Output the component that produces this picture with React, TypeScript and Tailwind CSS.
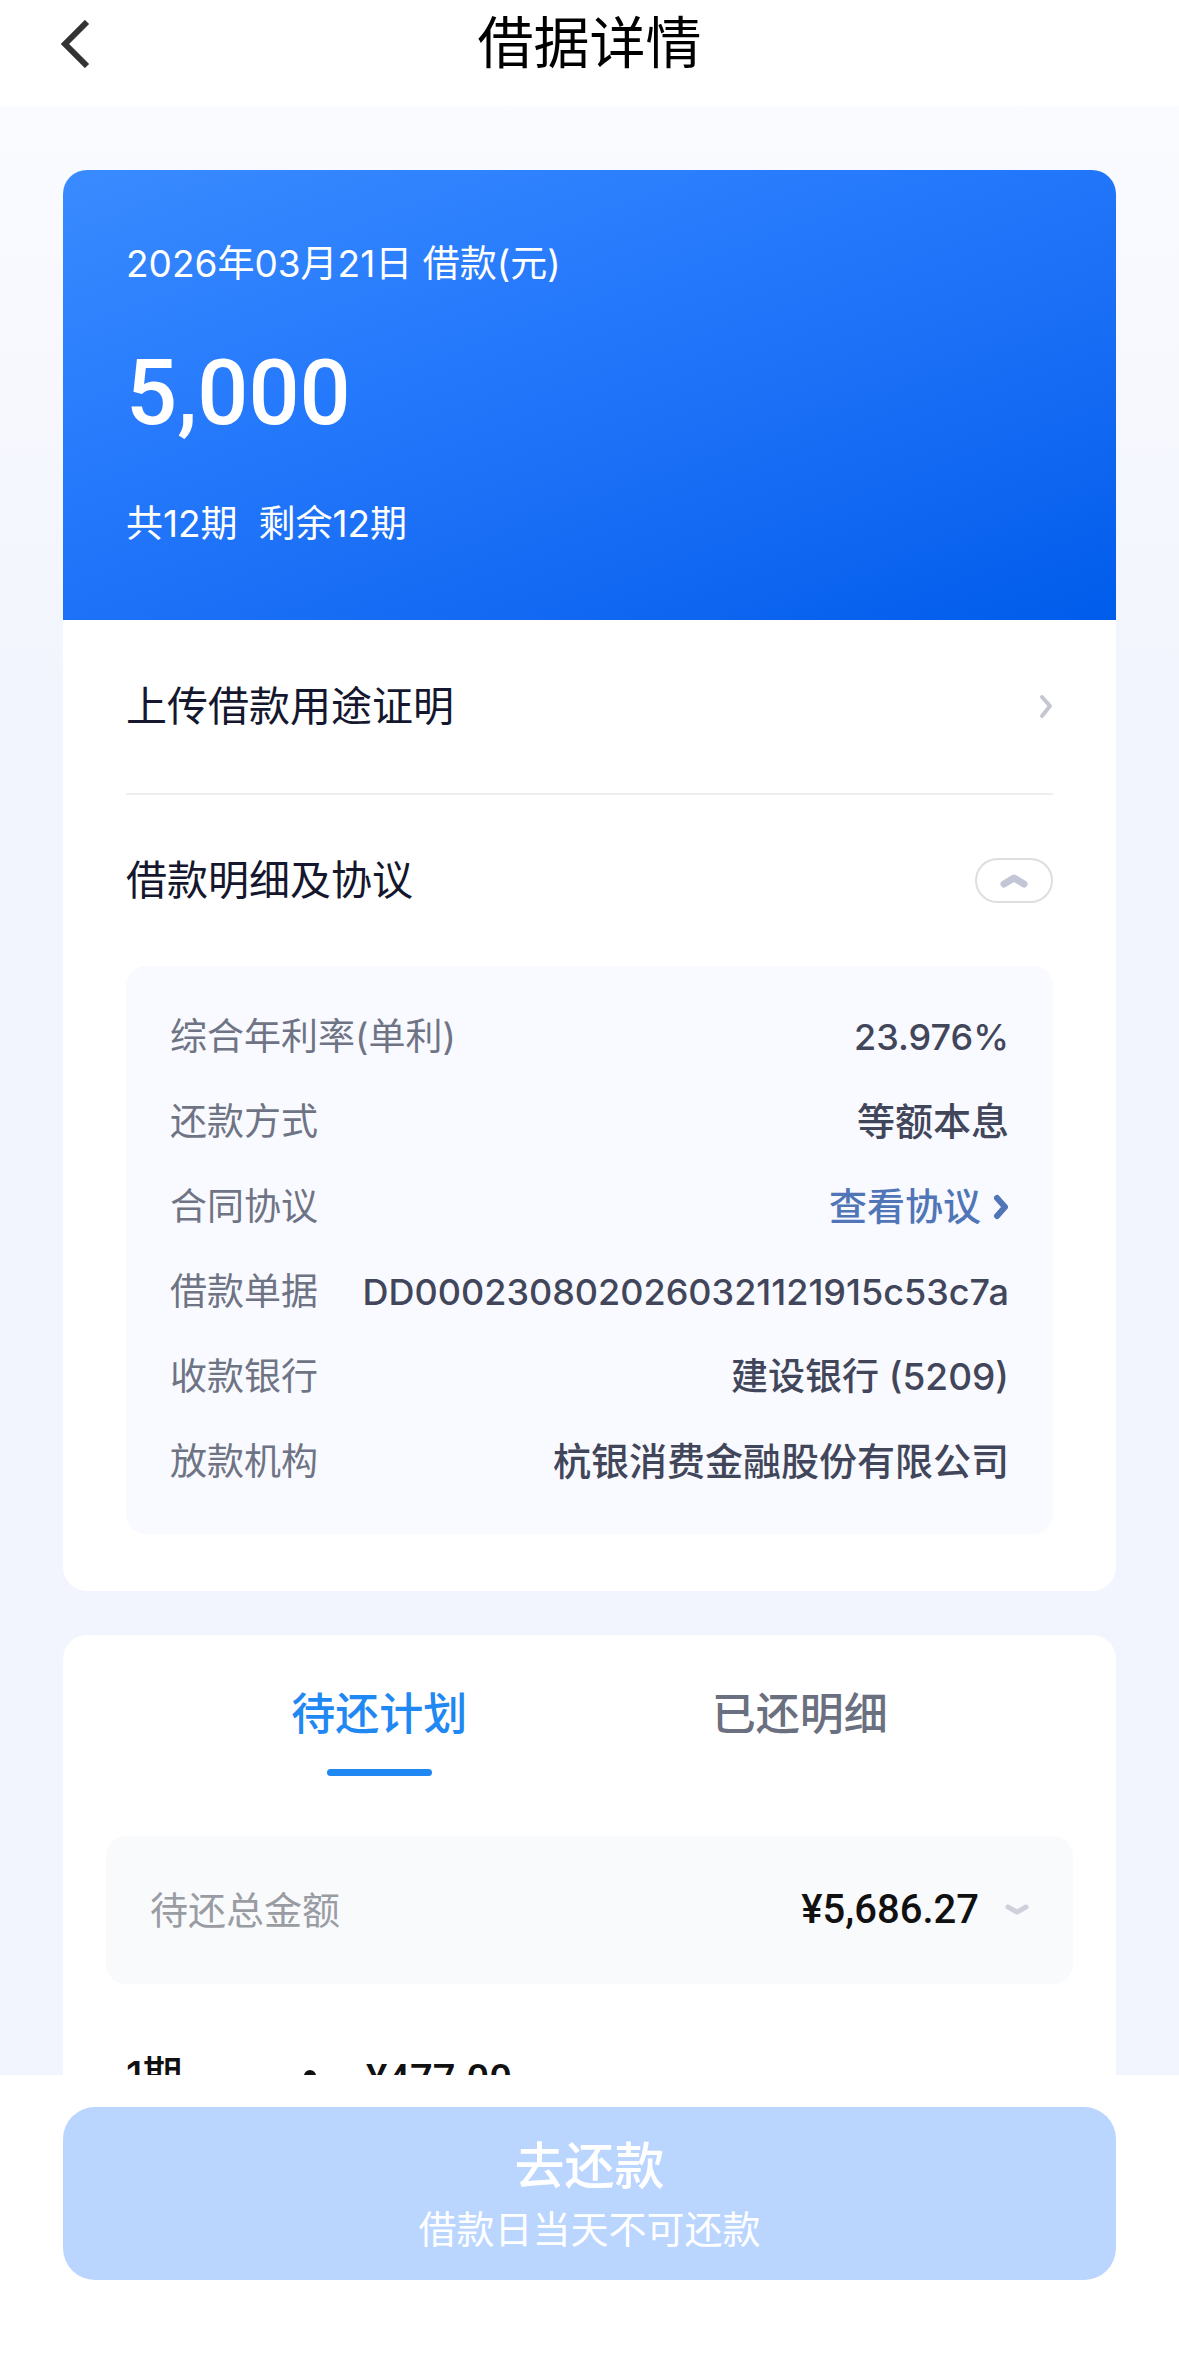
import { useState } from "react"

type ChevronProps = {
  d: string
  width: number
  height: number
  className?: string
  strokeWidth?: number
  cap?: "round" | "butt"
}

function Chevron({ d, width, height, className, strokeWidth = 4, cap = "round" }: ChevronProps) {
  return (
    <svg
      width={width}
      height={height}
      viewBox={`0 0 ${width} ${height}`}
      fill="none"
      stroke="currentColor"
      strokeWidth={strokeWidth}
      strokeLinecap={cap}
      strokeLinejoin={cap === "round" ? "round" : "miter"}
      className={className}
      aria-hidden="true"
    >
      <path d={d} />
    </svg>
  )
}

const details = [
  { label: "综合年利率(单利)", value: "23.976%", size: "text-[36px]" },
  { label: "还款方式", value: "等额本息", size: "text-[38px]" },
  { label: "合同协议", value: "查看协议", size: "text-[38px]", link: true },
  { label: "借款单据", value: "DD0002308020260321121915c53c7a", size: "text-[36px]" },
  { label: "收款银行", value: "建设银行 (5209)", size: "text-[37px]" },
  { label: "放款机构", value: "杭银消费金融股份有限公司", size: "text-[38px]" },
]

const tabs = ["待还计划", "已还明细"]

export default function App() {
  const [open, setOpen] = useState(true)
  const [tab, setTab] = useState(0)

  return (
    <div className="flex h-screen flex-col overflow-hidden bg-white font-['Inter','Noto_Sans_CJK_SC',sans-serif]">
      <header className="grid h-[106px] shrink-0 grid-cols-[1fr_auto_1fr] items-start px-[60px]">
        <button type="button" aria-label="返回" className="mt-5 justify-self-start">
          <Chevron d="M27 2 L5 24 L27 46" width={30} height={48} strokeWidth={6} cap="butt" className="text-[#333333]" />
        </button>
        <h1 className="text-[56px] leading-[86px] text-black">借据详情</h1>
      </header>

      <main className="flex min-h-0 flex-1 flex-col gap-11 overflow-hidden bg-linear-to-b from-[#fafbff] to-[#f2f5fd] to-30% px-[63px] pt-16">
        <section className="shrink-0 overflow-hidden rounded-3xl bg-white">
          <div className="bg-linear-160 from-[#3a8bff] via-[#2478fb] via-40% to-[#005ceb] px-[63px] pt-[66px] pb-[68px] text-[37px] leading-[56px] text-white">
            <p>2026年03月21日 借款(元)</p>
            <p className="my-10 font-['Roboto'] text-[90px] leading-[124px] font-medium">5,000</p>
            <p>共12期&nbsp; 剩余12期</p>
          </div>

          <div className="px-[63px] pb-[57px] text-[41px] text-[#14172e]">
            <a href="#proof" className="flex h-[175px] items-center justify-between border-b-2 border-[#eeeeee]">
              上传借款用途证明
              <Chevron d="M3 3 L11 12 L3 22" width={14} height={25} className="text-[#c4c6d0]" />
            </a>
            <div className="flex h-[171px] items-center justify-between">
              <h2>借款明细及协议</h2>
              <button
                type="button"
                aria-label="展开或收起明细"
                aria-expanded={open}
                onClick={() => setOpen(!open)}
                className="flex h-[45px] w-[78px] items-center justify-center rounded-full border-2 border-[#dedede]"
              >
                <Chevron d="M4 11 L14 5 L24 11" width={28} height={16} strokeWidth={7} className="text-[#c2c6d6]" />
              </button>
            </div>

            {open && (
              <dl className="rounded-[20px] bg-[#f9faff] px-11 pt-[28px] pb-[30px]">
                {details.map((item) => (
                  <div key={item.label} className="flex h-[85px] items-center justify-between">
                    <dt className="text-[37px] text-[#6f7485]">{item.label}</dt>
                    <dd className={`font-medium text-[#42465a] ${item.size}`}>
                      {item.link ? (
                        <a href="#agreement" className="flex items-center gap-3 text-[#5176b8]">
                          {item.value}
                          <Chevron d="M4 4 L12 13 L4 22" width={16} height={26} strokeWidth={6} />
                        </a>
                      ) : (
                        item.value
                      )}
                    </dd>
                  </div>
                ))}
              </dl>
            )}
          </div>
        </section>

        <section className="shrink-0 rounded-3xl bg-white px-[43px]">
          <div role="tablist" className="flex justify-center px-[63px] pt-[46px]">
            {tabs.map((name, i) => (
              <button
                key={name}
                type="button"
                role="tab"
                aria-selected={tab === i}
                onClick={() => setTab(i)}
                className={`flex flex-1 flex-col items-center text-[44px] leading-[66px] font-medium ${
                  tab === i ? "text-[#1f88f2]" : "text-[#6b7080]"
                }`}
              >
                {name}
                <span className={`mt-[22px] h-[7px] w-[105px] rounded-full ${tab === i ? "bg-[#1f88f2]" : ""}`} />
              </button>
            ))}
          </div>

          <button
            type="button"
            className="mt-[60px] flex h-[148px] w-full items-center justify-between rounded-[20px] bg-[#f9fafc] px-11"
          >
            <span className="text-[38px] text-[#999ca3]">待还总金额</span>
            <span className="flex items-center gap-[26px]">
              <span className="font-['Roboto'] text-[40px] font-medium text-[#111111]">¥5,686.27</span>
              <Chevron d="M3 3 L12 8 L21 3" width={24} height={12} strokeWidth={5} className="text-[#cfd0dc]" />
            </span>
          </button>

          <div className="mt-[62px] flex h-[60px] items-center px-5 text-[40px] text-[#111111]">
            <span className="w-[178px] font-medium">1期</span>
            <span className="size-3 rounded-full bg-[#111111]" />
            <span className="ml-[50px] pt-2 font-['Roboto'] font-medium">¥477.00</span>
          </div>
        </section>
      </main>

      <footer className="shrink-0 bg-white px-[63px] pt-8 pb-[74px]">
        <button
          type="button"
          disabled
          className="flex h-[173px] w-full flex-col items-center justify-center rounded-[32px] bg-[#bad6ff] text-white"
        >
          <span className="text-[50px] leading-[70px] font-medium">去还款</span>
          <span className="text-[38px] leading-[56px]">借款日当天不可还款</span>
        </button>
      </footer>
    </div>
  )
}
